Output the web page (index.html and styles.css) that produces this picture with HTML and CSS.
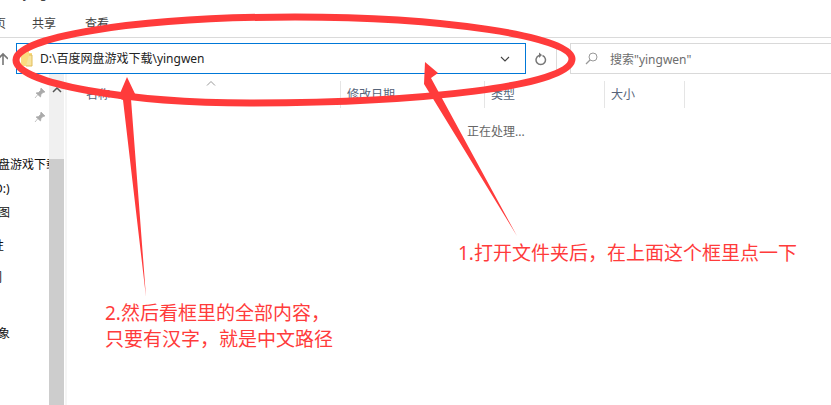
FILE: index.html
```html
<!DOCTYPE html>
<html lang="zh">
<head>
<meta charset="utf-8">
<title>yingwen</title>
<link rel="stylesheet" href="styles.css">
</head>
<body>
<div class="window">
  <div class="title"><span class="title-text">yingwen</span></div>
  <div class="tabs">
    <span class="tab-clip">页</span>
    <span class="tab">共享</span>
    <span class="tab">查看</span>
  </div>
  <div class="addressbar">
    <svg class="up" width="8" height="14" viewBox="0 0 8 14"><path d="M3 13V3M-2 7l5-5 5 5" fill="none" stroke="#777" stroke-width="1.6"/></svg>
    <div class="address">
      <svg class="folder" width="15" height="17" viewBox="0 0 15 17"><path d="M3 1h8v2h3v13H3z" fill="#fbdc80"/><path d="M11 5h3v11H8" fill="#f7e39e" stroke="#e2bd5a"/></svg>
      <span class="path">D:\百度网盘游戏下载\yingwen</span>
      <svg class="chev" width="10" height="6" viewBox="0 0 10 6"><path d="M1 1l4 4 4-4" fill="none" stroke="#444" stroke-width="1.100"/></svg>
    </div>
    <div class="refresh">
      <svg width="12" height="14" viewBox="0 0 12 14"><path d="M7.500 3.500a4.700 4.700 0 1 1-3.500 0" fill="none" stroke="#777" stroke-width="1.500"/><path d="M4 .5v5.500l3-3z" fill="#777"/></svg>
    </div>
    <div class="search">
      <svg width="13" height="13" viewBox="0 0 13 13"><circle cx="8" cy="5" r="4" fill="none" stroke="#999"/><path d="M5 8l-4 4" stroke="#999" stroke-width="1.200"/></svg>
      <span class="search-text">搜索"yingwen"</span>
    </div>
  </div>
  <div class="main">
    <aside class="nav">
      <div class="tree">
        <svg class="pin pin1" width="12" height="12" viewBox="0 0 12 12"><path d="M7 1l4 4-2 .5-2 2-.5 2.500L2 6l2.500-.5 2-2zM3.500 8L1 11" fill="#aaa" stroke="#aaa" stroke-width=".7"/></svg>
        <svg class="pin pin2" width="12" height="12" viewBox="0 0 12 12"><path d="M7 1l4 4-2 .5-2 2-.5 2.500L2 6l2.500-.5 2-2zM3.500 8L1 11" fill="#aaa" stroke="#aaa" stroke-width=".7"/></svg>
        <ul class="items">
          <li class="i1">盘游戏下载</li>
          <li class="i2">D:)</li>
          <li class="i3">图</li>
          <li class="i4">性</li>
          <li class="i5">们</li>
          <li class="i6">象</li>
        </ul>
      </div>
      <div class="scroll">
        <div class="track"><svg width="10" height="6" viewBox="0 0 10 6"><path d="M1 5l4-4 4 4" fill="none" stroke="#555" stroke-width="1.500"/></svg></div>
        <div class="thumb"></div>
      </div>
    </aside>
    <section class="content">
      <div class="cols">
        <div class="col c-name">名称<svg class="sort" width="10" height="5" viewBox="0 0 10 5"><path d="M1 4.500L5 .5l4 4" fill="none" stroke="#999"/></svg></div>
        <div class="col c-date">修改日期</div>
        <div class="col c-type">类型</div>
        <div class="col c-size">大小</div>
      </div>
      <div class="status">正在处理...</div>
    </section>
  </div>
</div>
<svg class="marks" width="831" height="405" viewBox="0 0 831 405">
  <path d="M295 17C130 17 16 38 16 60C16 84 130 103 250 103C420 103 572 86 572 59C572 36 440 17 295 17Z" fill="none" stroke="#ff3b3b" stroke-width="7"/>
  <path d="M425 62L438 73L431 78L517 236L424 84Z" fill="#ff3b3b"/>
  <path d="M127 77L137 98L131 99L146 297L123 100L118 98Z" fill="#ff3b3b"/>
</svg>
<p class="note note1">1.打开文件夹后，在上面这个框里点一下</p>
<p class="note note2">2.然后看框里的全部内容，<br>只要有汉字，就是中文路径</p>
</body>
</html>
```
FILE: styles.css
```css
* { box-sizing: border-box; }
html, body { margin: 0; height: 100%; background: #fff; overflow: hidden; }
body { font-family: "Noto Sans", "Noto Sans CJK SC", sans-serif; font-size: 12px; color: #1a1a1a; position: relative; }
.window { width: 831px; height: 405px; display: flex; flex-direction: column; overflow: hidden; }
.title { height: 6px; padding-left: 23px; color: #444; overflow: hidden; }
.title-text { display: block; line-height: 0; margin-top: -6px; }
.tabs { height: 32px; display: flex; align-items: center; border-bottom: 1px solid #dadada; font-size: 12px; color: #444; padding-top: 2px; }
.tab-clip { width: 6px; margin-right: 26px; direction: rtl; overflow: hidden; white-space: nowrap; }
.tab { width: 24px; margin-right: 29px; white-space: nowrap; }
.addressbar { height: 31px; margin-top: 5px; display: flex; align-items: center; }
.up { flex: none; margin-right: 8px; }
.address { width: 510px; height: 31px; border: 1px solid #0078d7; display: flex; align-items: center; padding-left: 1px; padding-right: 15px; }
.folder { flex: none; }
.path { margin-left: 7px; padding-bottom: 2px; flex: 1; white-space: nowrap; color: #222; }
.chev { flex: none; }
.refresh { width: 31px; height: 31px; border-right: 1px solid #dcdcdc; display: flex; align-items: center; justify-content: center; }
.search { margin-left: 13px; flex: 1; height: 31px; border: 1px solid #d9d9d9; border-right: 0; display: flex; align-items: center; padding-left: 14px; color: #6d6d6d; }
.search-text { margin-left: 12px; }
.main { flex: 1; display: flex; min-height: 0; }
.nav { width: 67px; flex: none; display: flex; border-right: 2px solid #f5f5f5; }
.tree { width: 49px; flex: none; position: relative; overflow: hidden; }
.pin { position: absolute; left: 34px; }
.pin1 { top: 13px; }
.pin2 { top: 37px; }
.items { list-style: none; margin: 0; padding: 0; position: absolute; top: 83px; left: 0; width: 49px; color: #111; }
.items li { white-space: nowrap; height: 16px; line-height: 16px; }
.i1 { margin-left: -2px; }
.i2 { margin-top: 8px; margin-left: -6px; }
.i3 { margin-top: 8px; margin-left: -2px; }
.i4 { margin-top: 17px; margin-left: -8px; }
.i5 { margin-top: 16px; margin-left: -10px; }
.i6 { margin-top: 40px; margin-left: -2px; }
.scroll { width: 15px; flex: none; display: flex; flex-direction: column; }
.track { height: 85px; background: #f0f0f0; padding: 13px 0 0 3px; line-height: 0; }
.thumb { flex: 1; background: #cdcdcd; }
.content { flex: 1; min-width: 0; }
.cols { height: 27px; margin-top: 7px; display: flex; color: #56647a; }
.col { height: 27px; line-height: 27px; padding-left: 6px; border-right: 1px solid #e5e5e5; position: relative; }
.c-name { width: 274px; padding-left: 19px; }
.c-date { width: 144px; }
.c-type { width: 120px; }
.c-size { width: 80px; }
.sort { position: absolute; left: 139px; top: 0; }
.status { margin: 14px 0 0 400px; color: #666; }
.marks { position: absolute; left: 0; top: 0; }
.note { position: absolute; margin: 0; font-size: 19px; line-height: 26px; color: #ff3b3b; white-space: nowrap; }
.note1 { left: 458px; top: 240px; }
.note2 { left: 105px; top: 300px; }
```
